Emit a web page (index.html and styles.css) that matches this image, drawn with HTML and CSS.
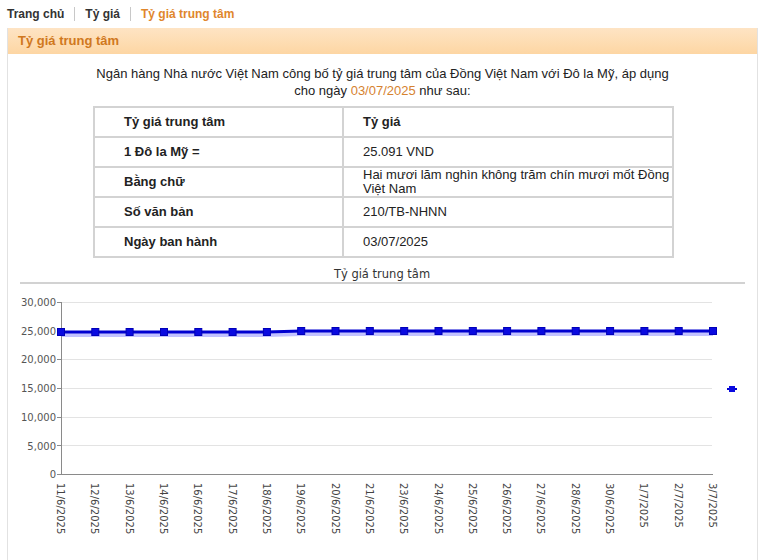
FILE: index.html
```html
<!DOCTYPE html>
<html lang="vi">
<head>
<meta charset="utf-8">
<title>Tỷ giá trung tâm</title>
<link rel="stylesheet" href="styles.css">
</head>
<body>
<div class="crumbs">
  <span class="crumb">Trang chủ</span><span class="sep"></span><span class="crumb">Tỷ giá</span><span class="sep"></span><span class="crumb active">Tỷ giá trung tâm</span>
</div>
<div class="panel">
  <div class="panel-head">Tỷ giá trung tâm</div>
  <p class="intro">Ngân hàng Nhà nước Việt Nam công bố tỷ giá trung tâm của Đồng Việt Nam với Đô la Mỹ, áp dụng<br>cho ngày <span class="date">03/07/2025</span> như sau:</p>
  <table class="rates">
    <colgroup><col class="w1"><col class="w2"></colgroup>
    <tr><th class="c1">Tỷ giá trung tâm</th><th class="c2">Tỷ giá</th></tr>
    <tr><td class="c1 lbl">1 Đô la Mỹ =</td><td class="c2">25.091 VND</td></tr>
    <tr><td class="c1 lbl">Bằng chữ</td><td class="c2">Hai mươi lăm nghìn không trăm chín mươi mốt Đồng<br>Việt Nam</td></tr>
    <tr><td class="c1 lbl">Số văn bản</td><td class="c2">210/TB-NHNN</td></tr>
    <tr><td class="c1 lbl">Ngày ban hành</td><td class="c2">03/07/2025</td></tr>
  </table>
  <svg class="chart" width="749" height="302" viewBox="8 258 749 302" xmlns="http://www.w3.org/2000/svg">
    <text class="ctitle" x="382" y="278" text-anchor="middle">Tỷ giá trung tâm</text>
    <line x1="20" y1="283" x2="745" y2="283" stroke="#d2d2d2" stroke-width="2"/>
    <g stroke="#e3e3e3" stroke-width="1">
      <line x1="61" y1="302.5" x2="712" y2="302.5"/>
      <line x1="61" y1="331.5" x2="712" y2="331.5"/>
      <line x1="61" y1="359.5" x2="712" y2="359.5"/>
      <line x1="61" y1="388.5" x2="712" y2="388.5"/>
      <line x1="61" y1="417.5" x2="712" y2="417.5"/>
      <line x1="61" y1="445.5" x2="712" y2="445.5"/>
    </g>
    <g stroke="#8a8a8a" stroke-width="1">
      <line x1="61.5" y1="302" x2="61.5" y2="475"/>
      <line x1="61" y1="474.5" x2="713" y2="474.5"/>
      <line x1="57" y1="302.5" x2="61" y2="302.5"/>
      <line x1="57" y1="331.5" x2="61" y2="331.5"/>
      <line x1="57" y1="359.5" x2="61" y2="359.5"/>
      <line x1="57" y1="388.5" x2="61" y2="388.5"/>
      <line x1="57" y1="417.5" x2="61" y2="417.5"/>
      <line x1="57" y1="445.5" x2="61" y2="445.5"/>
      <line x1="57" y1="474.5" x2="61" y2="474.5"/>
    </g>
    <g class="ylab" text-anchor="end">
      <text x="56" y="306">30,000</text>
      <text x="56" y="335">25,000</text>
      <text x="56" y="363">20,000</text>
      <text x="56" y="392">15,000</text>
      <text x="56" y="421">10,000</text>
      <text x="56" y="450">5,000</text>
      <text x="56" y="478">0</text>
    </g>
    <polyline points="61,334 95.3,334 129.6,334 164,334 198.3,334 232.6,334 266.9,334 301.2,333 335.5,333 369.8,333 404.2,333 438.5,333 472.8,333 507.1,333 541.4,333 575.7,333 610.1,333 644.4,333 678.7,333 713,333" fill="none" stroke="#6666ff" stroke-opacity="0.4" stroke-width="6"/>
    <polyline points="61,332 95.3,332 129.6,332 164,332 198.3,332 232.6,332 266.9,332 301.2,331 335.5,331 369.8,331 404.2,331 438.5,331 472.8,331 507.1,331 541.4,331 575.7,331 610.1,331 644.4,331 678.7,331 713,331" fill="none" stroke="#0000d0" stroke-width="3"/>
    <g fill="#0a0ae0" stroke="#0000b8" stroke-width="1">
      <rect x="57.5" y="328.5" width="7" height="7"/>
      <rect x="91.8" y="328.5" width="7" height="7"/>
      <rect x="126.1" y="328.5" width="7" height="7"/>
      <rect x="160.5" y="328.5" width="7" height="7"/>
      <rect x="194.8" y="328.5" width="7" height="7"/>
      <rect x="229.1" y="328.5" width="7" height="7"/>
      <rect x="263.4" y="328.5" width="7" height="7"/>
      <rect x="297.7" y="327.5" width="7" height="7"/>
      <rect x="332" y="327.5" width="7" height="7"/>
      <rect x="366.3" y="327.5" width="7" height="7"/>
      <rect x="400.7" y="327.5" width="7" height="7"/>
      <rect x="435" y="327.5" width="7" height="7"/>
      <rect x="469.3" y="327.5" width="7" height="7"/>
      <rect x="503.6" y="327.5" width="7" height="7"/>
      <rect x="537.9" y="327.5" width="7" height="7"/>
      <rect x="572.2" y="327.5" width="7" height="7"/>
      <rect x="606.6" y="327.5" width="7" height="7"/>
      <rect x="640.9" y="327.5" width="7" height="7"/>
      <rect x="675.2" y="327.5" width="7" height="7"/>
      <rect x="709.5" y="327.5" width="7" height="7"/>
    </g>
    <line x1="727" y1="389" x2="737" y2="389" stroke="#0000cc" stroke-width="2"/>
    <rect x="729" y="386" width="6" height="6" fill="#0a0ae0"/>
    <g class="xlab">
      <text transform="translate(61,483) rotate(90)" x="0" y="4">11/6/2025</text>
      <text transform="translate(95.3,483) rotate(90)" x="0" y="4">12/6/2025</text>
      <text transform="translate(129.6,483) rotate(90)" x="0" y="4">13/6/2025</text>
      <text transform="translate(164,483) rotate(90)" x="0" y="4">14/6/2025</text>
      <text transform="translate(198.3,483) rotate(90)" x="0" y="4">16/6/2025</text>
      <text transform="translate(232.6,483) rotate(90)" x="0" y="4">17/6/2025</text>
      <text transform="translate(266.9,483) rotate(90)" x="0" y="4">18/6/2025</text>
      <text transform="translate(301.2,483) rotate(90)" x="0" y="4">19/6/2025</text>
      <text transform="translate(335.5,483) rotate(90)" x="0" y="4">20/6/2025</text>
      <text transform="translate(369.8,483) rotate(90)" x="0" y="4">21/6/2025</text>
      <text transform="translate(404.2,483) rotate(90)" x="0" y="4">23/6/2025</text>
      <text transform="translate(438.5,483) rotate(90)" x="0" y="4">24/6/2025</text>
      <text transform="translate(472.8,483) rotate(90)" x="0" y="4">25/6/2025</text>
      <text transform="translate(507.1,483) rotate(90)" x="0" y="4">26/6/2025</text>
      <text transform="translate(541.4,483) rotate(90)" x="0" y="4">27/6/2025</text>
      <text transform="translate(575.7,483) rotate(90)" x="0" y="4">28/6/2025</text>
      <text transform="translate(610.1,483) rotate(90)" x="0" y="4">30/6/2025</text>
      <text transform="translate(644.4,483) rotate(90)" x="0" y="4">1/7/2025</text>
      <text transform="translate(678.7,483) rotate(90)" x="0" y="4">2/7/2025</text>
      <text transform="translate(713,483) rotate(90)" x="0" y="4">3/7/2025</text>
    </g>
  </svg>
</div>
</body>
</html>
```

FILE: styles.css
```css
html, body {
  margin: 0;
  padding: 0;
  background: #ffffff;
}
body {
  font-family: "Liberation Sans", Arial, sans-serif;
  color: #222;
}
.crumbs {
  height: 28px;
  padding-left: 7px;
  font-size: 12px;
  font-weight: bold;
  display: flex;
  align-items: center;
}
.crumb {
  color: #333;
}
.crumb.active {
  color: #e0862c;
}
.sep {
  display: inline-block;
  width: 1px;
  height: 14px;
  background: #c8c8c8;
  margin: 0 10px;
}
.panel {
  margin-left: 7px;
  width: 749px;
  border-left: 1px solid #e2e2e2;
  border-right: 1px solid #e2e2e2;
  min-height: 532px;
}
.panel-head {
  height: 26px;
  line-height: 26px;
  padding-left: 10px;
  font-size: 13px;
  font-weight: bold;
  color: #d0781e;
  background: linear-gradient(#fee4c4, #fdd6a3);
}
.intro {
  margin: 11px 0 0;
  font-size: 13px;
  line-height: 17px;
  text-align: center;
  color: #222;
}
.date {
  color: #d6822f;
}
.rates {
  margin: 7px 0 0 85px;
  width: 579px;
  table-layout: fixed;
  border-collapse: collapse;
  font-size: 13px;
}
.rates .w1 {
  width: 249px;
}
.rates .w2 {
  width: 330px;
}
.rates th, .rates td {
  border: 2px solid #d3d3d3;
  height: 28px;
  padding: 0;
  line-height: 14px;
  text-align: left;
  vertical-align: middle;
  color: #222;
  white-space: nowrap;
}
.rates th {
  font-weight: bold;
}
.rates .c1 {
  padding-left: 29px;
}
.rates .c2 {
  padding-left: 19px;
}
.rates .lbl {
  font-weight: bold;
}
.chart {
  display: block;
}
.ctitle {
  font-family: "DejaVu Sans", Verdana, sans-serif;
  font-size: 11.5px;
  fill: #333;
}
.ylab text {
  font-family: "DejaVu Sans", Verdana, sans-serif;
  font-size: 10px;
  fill: #555;
}
.xlab text {
  font-family: "DejaVu Sans", Verdana, sans-serif;
  font-size: 10px;
  fill: #444;
}
```
